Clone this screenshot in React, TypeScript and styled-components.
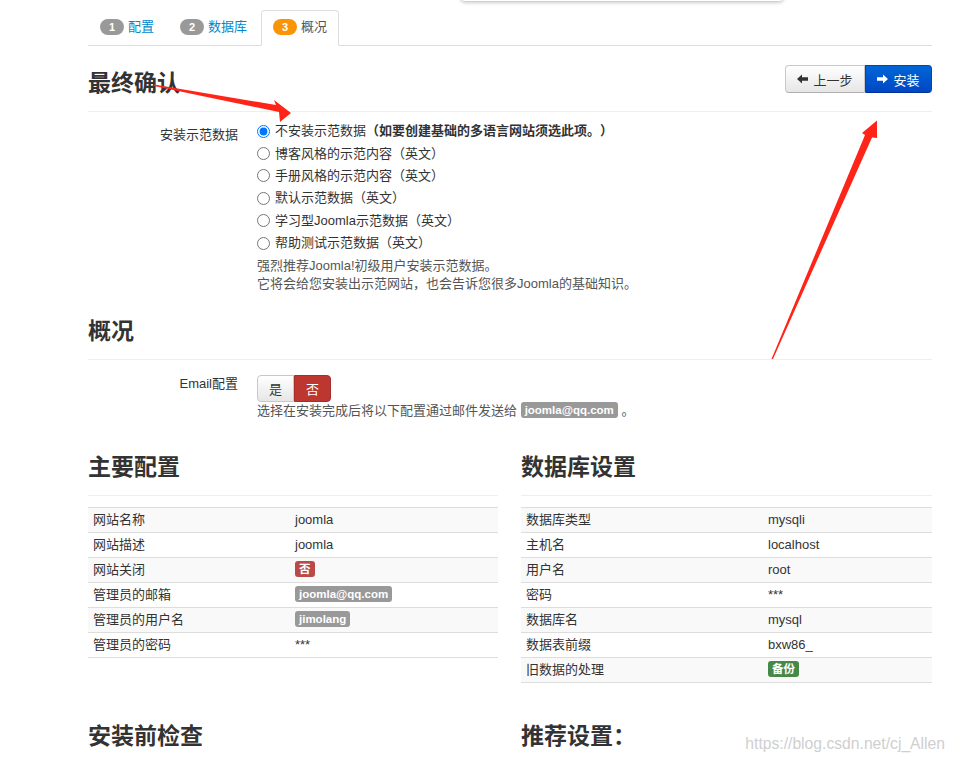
import React from "react";
import styled, { createGlobalStyle } from "styled-components";

const GlobalStyle = createGlobalStyle`
  html, body {
    margin: 0;
    padding: 0;
    background: #fff;
  }
  body {
    font-family: "Liberation Sans", "Noto Sans CJK SC", sans-serif;
    font-size: 13px;
    line-height: 18px;
    color: #333;
    text-spacing-trim: space-all;
  }
`;

const Page = styled.div`
  position: relative;
  width: 955px;
  height: 762px;
  overflow: hidden;
`;

const Container = styled.div`
  margin-left: 88px;
  width: 844px;
`;

// tabs

const TabBar = styled.ul`
  display: flex;
  margin: 0;
  padding: 10px 0 0;
  list-style: none;
  border-bottom: 1px solid #ddd;
`;

const Tab = styled.li<{ $active?: boolean }>`
  display: flex;
  align-items: center;
  gap: 4px;
  margin: 0 2px -1px 0;
  padding: 6px 11px 8px;
  line-height: 20px;
  border: 1px solid transparent;
  border-radius: 4px 4px 0 0;
  color: ${(p) => (p.$active ? "#555" : "#0088cc")};
  ${(p) =>
    p.$active &&
    `
    background: #fff;
    border-color: #ddd;
    border-bottom-color: #fff;
  `}
`;

const StepBadge = styled.span<{ $active?: boolean }>`
  display: inline-block;
  padding: 0 8px;
  height: 16px;
  min-width: 8px;
  line-height: 16px;
  border-radius: 8px;
  font-size: 11px;
  font-weight: bold;
  color: #fff;
  text-align: center;
  background: ${(p) => (p.$active ? "#f89406" : "#999")};
`;

// headers

const SectionHeader = styled.div<{ $top: number }>`
  display: flex;
  justify-content: space-between;
  align-items: flex-start;
  margin-top: ${(p) => p.$top}px;
  padding-bottom: 8px;
  border-bottom: 1px solid #eee;
`;

const Heading = styled.h3`
  margin: 0;
  font-size: 23px;
  line-height: 40px;
  font-weight: bold;
  color: #333;
`;

const BtnGroup = styled.div`
  display: flex;
  margin-top: 2px;
`;

const Btn = styled.button<{ $primary?: boolean }>`
  display: flex;
  align-items: center;
  gap: 5px;
  height: 28px;
  padding: 0 11.5px;
  font-family: inherit;
  font-size: 13px;
  border: 1px solid ${(p) => (p.$primary ? "#0044bb" : "#c8c8c8")};
  border-bottom-color: ${(p) => (p.$primary ? "#003399" : "#b0b0b0")};
  color: ${(p) => (p.$primary ? "#fff" : "#333")};
  background: ${(p) =>
    p.$primary
      ? "linear-gradient(#0066d6, #0047c4)"
      : "linear-gradient(#ffffff, #e6e6e6)"};
  border-radius: 0;
  &:first-child {
    border-radius: 4px 0 0 4px;
  }
  &:last-child {
    border-radius: 0 4px 4px 0;
  }
`;

const ArrowIcon = ({ dir, color }: { dir: "left" | "right"; color: string }) => (
  <svg width="11" height="10" viewBox="0 0 11 10">
    <path
      d="M0 5 L5 0.5 V3.3 H11 V6.7 H5 V9.5 Z"
      fill={color}
      transform={dir === "right" ? "translate(11 0) scale(-1 1)" : undefined}
    />
  </svg>
);

// form

const ControlGroup = styled.div<{ $top: number }>`
  display: flex;
  gap: 19px;
  margin-top: ${(p) => p.$top}px;
`;

const Label = styled.div<{ $pad?: number }>`
  width: 150px;
  flex: none;
  text-align: right;
  padding-top: ${(p) => p.$pad || 0}px;
  line-height: ${(p) => (p.$pad ? "22px" : "18px")};
`;

const Controls = styled.div`
  flex: 1;
`;

const RadioRow = styled.label`
  display: flex;
  align-items: center;
  height: 22.4px;
  color: #333;
`;

const Radio = styled.input`
  width: 13px;
  height: 13px;
  margin: 0 5px 0 0;
`;

const Strong = styled.b`
  font-weight: bold;
`;

const Help = styled.div<{ $top?: number }>`
  margin-top: ${(p) => p.$top || 0}px;
  color: #555;
  line-height: 18px;
`;

const Toggle = styled.div`
  display: flex;
`;

const ToggleBtn = styled.button<{ $on?: boolean }>`
  height: 27px;
  padding: 0 11px;
  font-family: inherit;
  font-size: 13px;
  border: 1px solid ${(p) => (p.$on ? "#a52f29" : "#c8c8c8")};
  color: ${(p) => (p.$on ? "#fff" : "#333")};
  background: ${(p) =>
    p.$on ? "#bd362f" : "linear-gradient(#ffffff, #e6e6e6)"};
  border-radius: 4px 0 0 4px;
  & + & {
    border-radius: 0 4px 4px 0;
  }
`;

const Badge = styled.span<{ $tone?: "grey" | "red" | "green" }>`
  display: inline-block;
  padding: 2px 4px;
  font-size: 11.5px;
  line-height: 12px;
  font-weight: bold;
  color: #fff;
  border-radius: 3px;
  vertical-align: 1px;
  background: ${(p) =>
    p.$tone === "red" ? "#b94a48" : p.$tone === "green" ? "#468847" : "#999"};
`;

// tables

const Columns = styled.div`
  display: grid;
  grid-template-columns: 410px 411px;
  column-gap: 23px;
  row-gap: 33px;
  margin-top: 27px;
`;

const Col = styled.div``;

const Table = styled.table<{ $split: number }>`
  width: 100%;
  margin-top: 11px;
  border-collapse: collapse;
  border-bottom: 1px solid #ddd;
  td {
    padding: 3px 5px;
    line-height: 18px;
    border-top: 1px solid #ddd;
    vertical-align: top;
    color: #333;
  }
  td:first-child {
    width: ${(p) => p.$split}px;
  }
  tr:nth-child(odd) td {
    background: #f9f9f9;
  }
`;

// overlays

const Watermark = styled.div`
  position: absolute;
  right: 10px;
  top: 734px;
  font-size: 15.7px;
  line-height: 20px;
  color: #cfcfcf;
`;

const TopShadow = styled.div`
  position: absolute;
  left: 461px;
  top: -10px;
  width: 322px;
  height: 11px;
  background: #fff;
  border-radius: 0 0 4px 4px;
  box-shadow: 0 1px 4px rgba(0, 0, 0, 0.3);
`;

const Annotations = styled.svg`
  position: absolute;
  left: 0;
  top: 0;
  pointer-events: none;
`;

type Row = [string, React.ReactNode];

const mainRows: Row[] = [
  ["网站名称", "joomla"],
  ["网站描述", "joomla"],
  ["网站关闭", <Badge $tone="red">否</Badge>],
  ["管理员的邮箱", <Badge>joomla@qq.com</Badge>],
  ["管理员的用户名", <Badge>jimolang</Badge>],
  ["管理员的密码", "***"],
];

const dbRows: Row[] = [
  ["数据库类型", "mysqli"],
  ["主机名", "localhost"],
  ["用户名", "root"],
  ["密码", "***"],
  ["数据库名", "mysql"],
  ["数据表前缀", "bxw86_"],
  ["旧数据的处理", <Badge $tone="green">备份</Badge>],
];

const sampleOptions = [
  "博客风格的示范内容（英文）",
  "手册风格的示范内容（英文）",
  "默认示范数据（英文）",
  "学习型Joomla示范数据（英文）",
  "帮助测试示范数据（英文）",
];

const InfoTable = ({ rows, split }: { rows: Row[]; split: number }) => (
  <Table $split={split}>
    <tbody>
      {rows.map(([k, v]) => (
        <tr key={k}>
          <td>{k}</td>
          <td>{v}</td>
        </tr>
      ))}
    </tbody>
  </Table>
);

export default function App() {
  return (
    <Page>
      <GlobalStyle />
      <TopShadow />
      <Container>
        <TabBar>
          <Tab>
            <StepBadge>1</StepBadge>配置
          </Tab>
          <Tab>
            <StepBadge>2</StepBadge>数据库
          </Tab>
          <Tab $active>
            <StepBadge $active>3</StepBadge>概况
          </Tab>
        </TabBar>

        <SectionHeader $top={17}>
          <Heading>最终确认</Heading>
          <BtnGroup>
            <Btn>
              <ArrowIcon dir="left" color="#333" />
              上一步
            </Btn>
            <Btn $primary>
              <ArrowIcon dir="right" color="#fff" />
              安装
            </Btn>
          </BtnGroup>
        </SectionHeader>

        <ControlGroup $top={8}>
          <Label $pad={4}>安装示范数据</Label>
          <Controls>
            <RadioRow>
              <Radio type="radio" name="sample" defaultChecked />
              不安装示范数据<Strong>（如要创建基础的多语言网站须选此项。）</Strong>
            </RadioRow>
            {sampleOptions.map((o) => (
              <RadioRow key={o}>
                <Radio type="radio" name="sample" />
                {o}
              </RadioRow>
            ))}
            <Help $top={3}>
              强烈推荐Joomla!初级用户安装示范数据。
              <br />
              它将会给您安装出示范网站，也会告诉您很多Joomla的基础知识。
            </Help>
          </Controls>
        </ControlGroup>

        <SectionHeader $top={18}>
          <Heading>概况</Heading>
        </SectionHeader>

        <ControlGroup $top={15}>
          <Label>Email配置</Label>
          <Controls>
            <Toggle>
              <ToggleBtn>是</ToggleBtn>
              <ToggleBtn $on>否</ToggleBtn>
            </Toggle>
            <Help>
              选择在安装完成后将以下配置通过邮件发送给 <Badge>joomla@qq.com</Badge> 。
            </Help>
          </Controls>
        </ControlGroup>

        <Columns>
          <Col>
            <SectionHeader $top={0}>
              <Heading>主要配置</Heading>
            </SectionHeader>
            <InfoTable rows={mainRows} split={192} />
          </Col>
          <Col>
            <SectionHeader $top={0}>
              <Heading>数据库设置</Heading>
            </SectionHeader>
            <InfoTable rows={dbRows} split={232} />
          </Col>
          <Col>
            <Heading>安装前检查</Heading>
          </Col>
          <Col>
            <Heading>推荐设置：</Heading>
          </Col>
        </Columns>
      </Container>

      <Annotations width="955" height="762" viewBox="0 0 955 762">
        <polygon
          points="154,84.5 276,105 274,100 291,113 280,122 279,112 154,86"
          fill="#ff2418"
        />
        <polygon
          points="771.5,359 865,135 862,133 877,120.5 877,138 872,137.5 773,359"
          fill="#ff2418"
        />
      </Annotations>
      <Watermark>https://blog.csdn.net/cj_Allen</Watermark>
    </Page>
  );
}
